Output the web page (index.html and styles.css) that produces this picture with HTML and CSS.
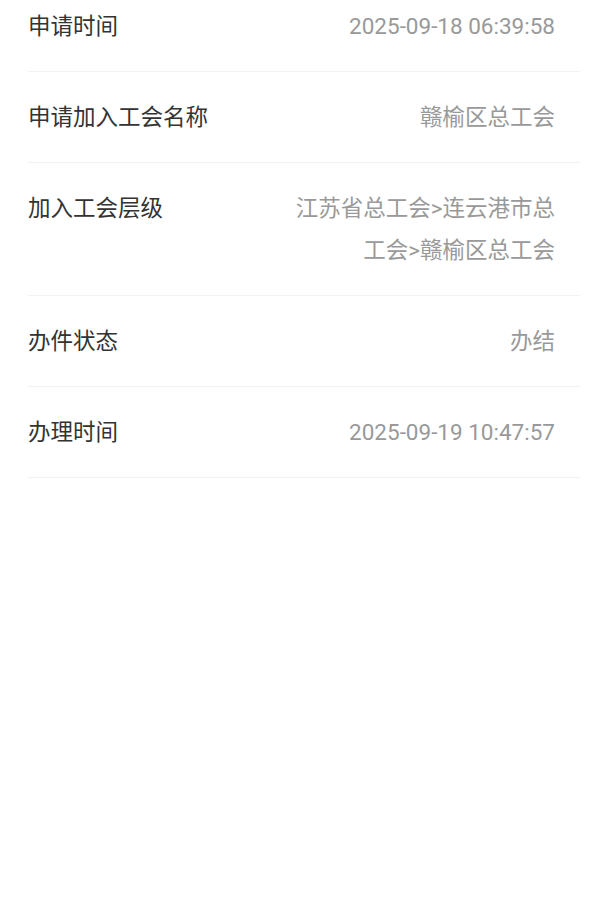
FILE: index.html
```html
<!DOCTYPE html>
<html lang="zh-CN">
<head>
    <meta charset="UTF-8">
    <meta name="viewport" content="width=device-width, initial-scale=1.0">
    <title>办件详情</title>
    <link rel="stylesheet" href="styles.css">
</head>
<body>
    <div class="detail-list">
        <div class="detail-row">
            <div class="detail-label">申请时间</div>
            <div class="detail-value">2025-09-18 06:39:58</div>
        </div>
        <div class="detail-row">
            <div class="detail-label">申请加入工会名称</div>
            <div class="detail-value">赣榆区总工会</div>
        </div>
        <div class="detail-row">
            <div class="detail-label">加入工会层级</div>
            <div class="detail-value">江苏省总工会&gt;连云港市总工会&gt;赣榆区总工会</div>
        </div>
        <div class="detail-row">
            <div class="detail-label">办件状态</div>
            <div class="detail-value">办结</div>
        </div>
        <div class="detail-row">
            <div class="detail-label">办理时间</div>
            <div class="detail-value">2025-09-19 10:47:57</div>
        </div>
    </div>
</body>
</html>
```

FILE: styles.css
```css
body {
    margin: 0;
    background: #fff;
    font-family: Roboto, "Noto Sans CJK SC", sans-serif;
    min-height: 100vh;
}

/* page is scrolled a little, first row is cut at the top */
.detail-list {
    margin-top: -19px;
    padding: 0 21px 0 28px;
}

.detail-row {
    display: flex;
    justify-content: space-between;
    align-items: flex-start;
    padding: 24px 25px 24px 0;
    border-bottom: 1px solid #f2f2f2;
    font-size: 22.5px;
    line-height: 42px;
}

.detail-label {
    color: #333;
    flex-shrink: 0;
}

.detail-value {
    color: #999;
    text-align: right;
    max-width: 264px;
}
```
